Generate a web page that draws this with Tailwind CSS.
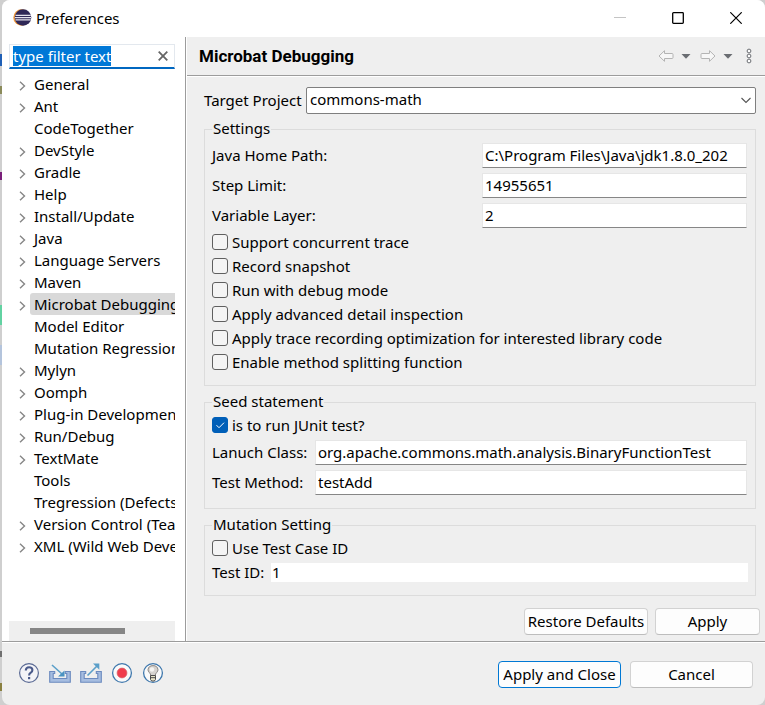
<!DOCTYPE html>
<html lang="en">
<head>
<meta charset="utf-8">
<meta name="viewport" content="width=device-width, initial-scale=1">
<title>Preferences</title>
<script src="https://cdn.jsdelivr.net/npm/@tailwindcss/browser@4"></script>
</head>
<body class="relative bg-[#cfcfcf] pl-[2px] font-['Noto_Sans',sans-serif] text-[15px] leading-5 text-black">
<!-- Sliver of the window behind the dialog -->
<div class="absolute inset-y-0 left-0 w-[2px]" aria-hidden="true">
  <div class="absolute top-[54px] h-3 w-full bg-[#1f5fb5]"></div>
  <div class="absolute top-[86px] h-2 w-full bg-[#8a8a5a]"></div>
  <div class="absolute top-[172px] h-2 w-full bg-[#7a1f7a]"></div>
  <div class="absolute top-[305px] h-5 w-full bg-[#62d2a2]"></div>
  <div class="absolute top-[345px] h-5 w-full bg-[#b4c4dc]"></div>
  <div class="absolute top-[651px] h-1.5 w-full bg-[#707070]"></div>
  <div class="absolute top-[683px] h-2 w-full bg-[#8a8040]"></div>
</div>

<div class="relative flex min-h-screen flex-col overflow-hidden rounded-lg bg-[#efefef]">
  <header class="flex h-[37px] items-center bg-white pb-0.5 pl-[11px]">
    <svg class="mr-1 size-[19px] shrink-0" viewBox="0 0 19 19" aria-hidden="true">
      <circle cx="8.6" cy="9.5" r="8.3" fill="#f0983a"/>
      <circle cx="10" cy="9.5" r="8.3" fill="#2f2757"/>
      <path d="M2.5 7.3h15.2M1.8 9.6h16.3M2.5 11.9h15.2" stroke="#e3e1ec" stroke-width="1.3"/>
    </svg>
    <h1 class="flex-1 text-[15px]">Preferences</h1>
    <button class="flex h-9 w-[58px] items-center justify-center" aria-label="Minimize"><svg class="size-3" viewBox="0 0 12 12"><path d="M0 5.5h12" stroke="#c4c4c4"/></svg></button>
    <button class="flex h-9 w-[58px] items-center justify-center" aria-label="Maximize"><svg class="size-3" viewBox="0 0 12 12"><rect x=".7" y=".7" width="10.6" height="10.6" rx=".8" fill="none" stroke="#000" stroke-width="1.3"/></svg></button>
    <button class="flex h-9 w-[58px] items-center justify-center" aria-label="Close"><svg class="size-3" viewBox="0 0 12 12"><path d="M.3.3l11.4 11.4M11.7.3L.3 11.7" stroke="#000" stroke-width="1.2"/></svg></button>
  </header>

  <div class="flex flex-1 border-b border-[#9c9c9c]">
    <aside class="flex w-[184px] shrink-0 flex-col border-r border-[#9c9c9c] bg-white pl-[7px] pr-[10px]">
      <div class="mt-[7px] flex h-[25px] items-center border border-b-2 border-[#e3e8ee] border-b-[#0067c0] pl-[3px] pr-[5px]">
        <input id="filter" aria-label="type filter text" value="type filter text" class="h-5 w-full min-w-0 flex-1 outline-none selection:bg-[#0078d7] selection:text-white">
        <button aria-label="Clear" class="flex size-3 items-center justify-center"><svg class="size-[10px]" viewBox="0 0 10 10"><path d="M.7.7l8.6 8.6M9.3.7L.7 9.3" stroke="#666" stroke-width="1.8"/></svg></button>
      </div>
      <ul id="tree" role="tree" aria-label="Preference pages" class="mt-1 overflow-hidden pl-[6px]"></ul>
      <div class="mt-auto flex h-5 items-center bg-[#efefef] pl-[21px]"><div class="h-1.5 w-[95px] bg-[#868686]"></div></div>
    </aside>

    <main class="flex min-w-0 flex-1 flex-col border-l border-white">
      <div class="flex h-[39px] items-center border-b border-[#9c9c9c] pl-3 pr-[13px]">
        <h2 class="flex-1 font-[Roboto,sans-serif] text-[17px] font-bold">Microbat Debugging</h2>
        <button aria-label="Back"><svg class="h-3 w-4" viewBox="0 0 16 12"><path d="M1 6l5.5-5.3v2.8H14q1 0 1 1v3q0 1-1 1H6.500v2.800z" fill="#f7f7f7" stroke="#b4b4b4"/></svg></button>
        <button class="ml-[7px]" aria-label="Back history"><svg class="h-3 w-[10px]" viewBox="0 0 10 12"><path d="M.5 4h9L5 8.800z" fill="#6a6d72"/></svg></button>
        <button class="ml-[9px]" aria-label="Forward"><svg class="h-3 w-4" viewBox="0 0 16 12"><path d="M15 6L9.500.7v2.800H2q-1 0-1 1v3q0 1 1 1h7.500v2.800z" fill="#f7f7f7" stroke="#b4b4b4"/></svg></button>
        <button class="ml-[7px]" aria-label="Forward history"><svg class="h-3 w-[10px]" viewBox="0 0 10 12"><path d="M.5 4h9L5 8.800z" fill="#6a6d72"/></svg></button>
        <button class="ml-[13px]" aria-label="View menu"><svg class="h-4 w-[6px]" viewBox="0 0 6 16"><g fill="#fff" stroke="#6a6d72"><circle cx="3" cy="3" r="1.900"/><circle cx="3" cy="8" r="1.900"/><circle cx="3" cy="13" r="1.900"/></g></svg></button>
      </div>

      <form class="flex flex-1 flex-col border-t border-white pl-[17px] pt-[10px]" onsubmit="return false">
        <div class="mr-[9px] flex items-center">
          <label for="project" class="w-[102px] shrink-0 pb-0.5">Target Project</label>
          <div class="relative flex-1">
            <select id="project" class="block h-[27px] w-full appearance-none rounded-xs border border-[#7f7f7f] bg-white pb-1 pl-[3px]"><option>commons-math</option></select>
            <svg class="pointer-events-none absolute right-[5px] top-[10px] h-[7px] w-[10px]" viewBox="0 0 10 7"><path d="M.5 1L5 5.500 9.500 1" fill="none" stroke="#555" stroke-width="1.100"/></svg>
          </div>
        </div>

        <fieldset class="mr-[9px] mt-[5px] min-w-0 border border-[#dcdcdc] px-[7px] pb-[11px] pt-1">
          <legend class="h-5 px-px leading-[18px]">Settings</legend>
          <div class="grid grid-cols-[270px_1fr] items-center gap-y-[5px] pr-px">
            <label for="home" class="pb-0.5">Java Home Path:</label>
            <input id="home" value="C:\Program Files\Java\jdk1.8.0_202" class="h-[25px] min-w-0 border border-[#e6e6e6] border-b-[#868686] bg-white px-[2px] pb-0.5">
            <label for="steps" class="pb-0.5">Step Limit:</label>
            <input id="steps" value="14955651" class="h-[25px] min-w-0 border border-[#e6e6e6] border-b-[#868686] bg-white px-[2px] pb-0.5">
            <label for="layer" class="pb-0.5">Variable Layer:</label>
            <input id="layer" value="2" class="h-[25px] min-w-0 border border-[#e6e6e6] border-b-[#868686] bg-white px-[2px] pb-0.5">
          </div>
          <div class="mt-[2px]">
            <label class="flex h-6 items-center gap-1"><input type="checkbox" class="size-4 shrink-0 appearance-none rounded-[3px] border border-[#5f5f5f] bg-[#f4f4f4]">Support concurrent trace</label>
            <label class="flex h-6 items-center gap-1"><input type="checkbox" class="size-4 shrink-0 appearance-none rounded-[3px] border border-[#5f5f5f] bg-[#f4f4f4]">Record snapshot</label>
            <label class="flex h-6 items-center gap-1"><input type="checkbox" class="size-4 shrink-0 appearance-none rounded-[3px] border border-[#5f5f5f] bg-[#f4f4f4]">Run with debug mode</label>
            <label class="flex h-6 items-center gap-1"><input type="checkbox" class="size-4 shrink-0 appearance-none rounded-[3px] border border-[#5f5f5f] bg-[#f4f4f4]">Apply advanced detail inspection</label>
            <label class="flex h-6 items-center gap-1"><input type="checkbox" class="size-4 shrink-0 appearance-none rounded-[3px] border border-[#5f5f5f] bg-[#f4f4f4]">Apply trace recording optimization for interested library code</label>
            <label class="flex h-6 items-center gap-1"><input type="checkbox" class="size-4 shrink-0 appearance-none rounded-[3px] border border-[#5f5f5f] bg-[#f4f4f4]">Enable method splitting function</label>
          </div>
        </fieldset>

        <fieldset class="mr-[9px] mt-[6px] min-w-0 border border-[#dcdcdc] px-[7px] pb-[13px] pt-px">
          <legend class="h-5 px-px leading-[18px]">Seed statement</legend>
          <label class="flex h-6 items-center gap-1">
            <span class="relative size-4 shrink-0">
              <input type="checkbox" checked class="peer block size-4 appearance-none rounded-[3px] border border-[#5f5f5f] bg-[#f4f4f4] checked:border-[#005fb8] checked:bg-[#005fb8]">
              <svg class="pointer-events-none absolute inset-0 hidden size-4 peer-checked:block" viewBox="0 0 16 16"><path d="M4.500 8.200l2.500 2.500 5-5" fill="none" stroke="#fff"/></svg>
            </span>is to run JUnit test?</label>
          <div class="mt-[3px] grid grid-cols-[103px_1fr] items-center gap-y-[5px] pr-px">
            <label for="cls" class="pb-0.5">Lanuch Class:</label>
            <input id="cls" value="org.apache.commons.math.analysis.BinaryFunctionTest" class="h-[25px] min-w-0 border border-[#e6e6e6] border-b-[#868686] bg-white px-[2px] pb-0.5">
            <label for="method" class="pb-0.5">Test Method:</label>
            <input id="method" value="testAdd" class="h-[25px] min-w-0 border border-[#e6e6e6] border-b-[#868686] bg-white px-[2px] pb-0.5">
          </div>
        </fieldset>

        <fieldset class="mr-[9px] mt-[6px] min-w-0 border border-[#dcdcdc] px-[7px] pb-[13px] pt-px">
          <legend class="h-5 px-px leading-[18px]">Mutation Setting</legend>
          <label class="flex h-6 items-center gap-1"><input type="checkbox" class="size-4 shrink-0 appearance-none rounded-[3px] border border-[#5f5f5f] bg-[#f4f4f4]">Use Test Case ID</label>
          <div class="mt-[3px] grid grid-cols-[59px_1fr] items-center">
            <label for="tid" class="h-[19px] leading-[19px]">Test ID:</label>
            <input id="tid" value="1" class="h-[19px] min-w-0 bg-white px-px pb-0.5">
          </div>
        </fieldset>

        <div class="mb-[6px] mr-[5px] mt-3 flex justify-end gap-[7px]">
          <button class="h-[27px] w-[124px] rounded-sm border border-[#d2d2d2] border-b-[#bdbdbd] bg-[#fdfdfd] pb-0.5">Restore Defaults</button>
          <button class="h-[27px] w-[105px] rounded-sm border border-[#d2d2d2] border-b-[#bdbdbd] bg-[#fdfdfd] pb-0.5">Apply</button>
        </div>
      </form>
    </main>
  </div>

  <footer class="flex h-[63px] items-center border-t border-white pl-4 pr-3">
    <div class="flex gap-[9px] pb-0.5">
      <button aria-label="Help"><svg class="size-[22px]" viewBox="0 0 22 22"><circle cx="11" cy="11" r="9.400" fill="#f3f3f7" stroke="#5a6a94" stroke-width="1.200"/><path d="M7.800 8.600q0-3.300 3.300-3.300t3.300 2.800q0 1.500-1.600 2.600-1.700 1.100-1.700 2.700" fill="none" stroke="#4a5a8a" stroke-width="2.100"/><rect x="10" y="15" width="2.200" height="2.200" fill="#4a5a8a"/></svg></button>
      <button aria-label="Import"><svg class="size-[22px]" viewBox="0 0 22 22"><path d="M.7 9.500h5v2H4.200v5h13.600v-5h-1.500v-2h5v10.800H.7z" fill="#a6bde0" stroke="#6b8abf" stroke-width="1.100"/><path d="M3 3l10 9" stroke="#5a9fc9" stroke-width="1.600"/><path d="M15.500 14.500v-6l-6.500 6z" fill="#4a93c2"/></svg></button>
      <button aria-label="Export"><svg class="size-[22px]" viewBox="0 0 22 22"><path d="M.7 9.500h5v2H4.200v5h13.600v-5h-1.500v-2h5v10.800H.7z" fill="#a6bde0" stroke="#6b8abf" stroke-width="1.100"/><path d="M7.500 13.500L17 4" stroke="#5a9fc9" stroke-width="1.600"/><path d="M19.300 1.500v6.300l-6.300-6.300z" fill="#5a9fc9"/></svg></button>
      <button aria-label="Record"><svg class="size-[22px]" viewBox="0 0 22 22"><circle cx="11" cy="11" r="9.400" fill="#fafafa" stroke="#3f78ad" stroke-width="1.300"/><circle cx="11" cy="11" r="4.900" fill="#f03c4c" stroke="#d9606a" stroke-width=".8"/></svg></button>
      <button aria-label="Tips"><svg class="size-[22px]" viewBox="0 0 22 22"><circle cx="11" cy="11" r="9.400" fill="#fafafa" stroke="#3f78ad" stroke-width="1.300"/><path d="M8.700 13.500q0-1.700-1.400-3Q6 9 6 7.800 6.500 3.600 11 3.600T16 7.800q0 1.200-1.300 2.700-1.400 1.300-1.400 3z" fill="#d6d3cf" stroke="#8b8784"/><circle cx="10" cy="7.500" r="2.200" fill="#f6f5f3"/><path d="M8.500 13.500h5v4l-1.200 1.500H9.700L8.500 17.500z" fill="#e8e4c8" stroke="#4c4c4c"/><path d="M8.500 15.700h5" stroke="#4c4c4c"/></svg></button>
    </div>
    <div class="ml-auto flex gap-[9px]">
      <button class="h-[27px] w-[123px] rounded-sm border border-[#0078d4] bg-[#fdfdfd]">Apply and Close</button>
      <button class="h-[27px] w-[123px] rounded-sm border border-[#d2d2d2] border-b-[#bdbdbd] bg-[#fdfdfd]">Cancel</button>
    </div>
  </footer>
</div>

<script>
  // [label, has children]
  const pages = [["General",1],["Ant",1],["CodeTogether",0],["DevStyle",1],["Gradle",1],["Help",1],["Install/Update",1],["Java",1],["Language Servers",1],["Maven",1],["Microbat Debugging",1],["Model Editor",0],["Mutation Regression",0],["Mylyn",1],["Oomph",1],["Plug-in Development",1],["Run/Debug",1],["TextMate",1],["Tools",0],["Tregression (Defects4J)",0],["Version Control (Team)",1],["XML (Wild Web Developer)",1]];
  document.getElementById("tree").innerHTML = pages.map(([name, kids]) => `
    <li role="treeitem" class="flex h-[22px] items-center whitespace-nowrap">
      <span class="flex w-[15px] shrink-0 pl-0.5 pt-1">${kids ? '<svg class="h-[10px] w-[10px]" viewBox="0 0 10 10"><path d="M3 .8L7.500 5 3 9.200" fill="none" stroke="#868686" stroke-width="1.400"/></svg>' : ''}</span>
      <a href="#" class="h-[22px] flex-1 rounded-l-[3px] pl-1 leading-[22px] ${name === "Microbat Debugging" ? "bg-[#d9d9d9]" : ""}">${name}</a>
    </li>`).join("");
  const filter = document.getElementById("filter");
  filter.focus();
  filter.select();
</script>
</body>
</html>
